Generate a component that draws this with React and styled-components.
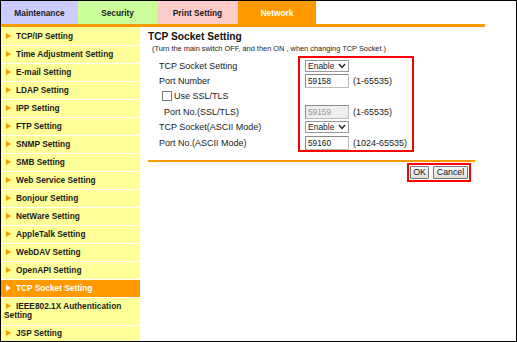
import React from "react";
import styled, { createGlobalStyle } from "styled-components";

const GlobalStyle = createGlobalStyle`
  html, body {
    margin: 0;
    padding: 0;
    background: #fff;
  }
  body {
    font-family: "Liberation Sans", Arial, sans-serif;
  }
`;

// Frame & tabs

const Frame = styled.div`
  width: 517px;
  height: 342px;
  box-sizing: border-box;
  border: 1px solid #000;
  overflow: hidden;
  display: flex;
  flex-direction: column;
  background: #fff;
`;

const TabBar = styled.div`
  display: flex;
  width: 484px;
  height: 23px;
  border-bottom: 3px solid #ff9900;
  flex-shrink: 0;
`;

const Tab = styled.div`
  width: ${p => p.w}px;
  background: ${p => p.bg};
  color: ${p => (p.active ? "#fff" : "#1a1a1a")};
  font-weight: bold;
  font-size: 8.3px;
  display: flex;
  align-items: center;
  justify-content: center;
  padding-top: 1px;
  box-sizing: border-box;
`;

const Body = styled.div`
  display: flex;
  flex: 1;
  min-height: 0;
`;

// Sidebar

const Sidebar = styled.div`
  width: 139px;
  flex-shrink: 0;
  background: #ffff99;
  padding-top: 1px;
`;

const MenuItem = styled.div`
  background: ${p => (p.active ? "#ff9900" : "#ffff99")};
  color: ${p => (p.active ? "#fff" : "#1a1a1a")};
  border-bottom: 1px solid #fff;
  font-size: 8.3px;
  font-weight: bold;
  line-height: 9.5px;
  padding: 3.75px 3px 3.75px 3px;
`;

const Arrow = styled.span`
  display: inline-block;
  width: 0;
  height: 0;
  border-left: 5px solid ${p => (p.active ? "#fff" : "#ff9900")};
  border-top: 3px solid transparent;
  border-bottom: 3px solid transparent;
  margin: 0 5px 0 2px;
`;

// Main area

const Main = styled.div`
  flex: 1;
  padding: 3px 0 0 8px;
`;

const Content = styled.div`
  width: 327px;
`;

const Heading = styled.h1`
  margin: 0;
  font-size: 10.2px;
  font-weight: bold;
  line-height: 13px;
  color: #111;
`;

const Note = styled.div`
  font-size: 7.4px;
  line-height: 10px;
  color: #222;
  padding-left: 4px;
  margin-top: 1px;
`;

const FormArea = styled.div`
  display: flex;
  margin-top: 2px;
`;

const LabelCol = styled.div`
  width: 139px;
  padding: 2px 0 0 11px;
  display: flex;
  flex-direction: column;
`;

const Label = styled.div`
  height: 15.4px;
  display: flex;
  align-items: center;
  font-size: 9px;
  color: #1a1a1a;
  padding-left: ${p => p.indent || 0}px;
`;

const CheckBox = styled.span`
  width: 8px;
  height: 8px;
  border: 1px solid #777;
  background: #fff;
  margin-right: 2px;
`;

const Marked = styled.div`
  width: 116px;
  box-sizing: border-box;
  border: 2px solid #ff0000;
  padding-left: 5px;
  display: flex;
  flex-direction: column;
`;

const Row = styled.div`
  height: 15.4px;
  display: flex;
  align-items: center;
  gap: 4px;
  font-size: 9px;
  color: #1a1a1a;
`;

const SelectWrap = styled.div`
  position: relative;
  width: 44px;
  height: 12px;
`;

const Select = styled.select`
  appearance: none;
  width: 44px;
  height: 12px;
  box-sizing: border-box;
  border: 1px solid #999;
  border-radius: 0;
  background: #fff;
  font-family: "Liberation Sans", Arial, sans-serif;
  font-size: 8.5px;
  padding: 0 0 0 2px;
  color: #222;
  margin: 0;
`;

const Chevron = styled.svg`
  position: absolute;
  right: 3px;
  top: 3px;
  pointer-events: none;
`;

const TextBox = styled.input`
  width: 44px;
  height: 14px;
  box-sizing: border-box;
  border: 1px solid #888;
  border-right-color: #bbb;
  border-bottom-color: #bbb;
  margin: 0;
  padding: 0 2px;
  font-family: "Liberation Sans", Arial, sans-serif;
  font-size: 8.3px;
  color: #111;
  background: #fff;
  &:disabled {
    background: #eeeeee;
    color: #999;
  }
`;

const Divider = styled.div`
  height: 2px;
  background: #ff9900;
  margin-top: 8px;
`;

const ButtonBar = styled.div`
  display: flex;
  justify-content: flex-end;
  padding-right: 4px;
  margin-top: 1px;
`;

const ButtonBox = styled.div`
  display: flex;
  gap: 4px;
  border: 2px solid #ff0000;
  padding: 1px;
`;

const Button = styled.button`
  height: 13px;
  width: ${p => p.w}px;
  padding: 0;
  margin: 0;
  box-sizing: border-box;
  font-family: "Liberation Sans", Arial, sans-serif;
  font-size: 8.8px;
  color: #111;
  background: linear-gradient(#fafafa, #dedede);
  border: 1px solid #777;
  border-radius: 1px;
  line-height: 11px;
`;

const menu = [
  "TCP/IP Setting",
  "Time Adjustment Setting",
  "E-mail Setting",
  "LDAP Setting",
  "IPP Setting",
  "FTP Setting",
  "SNMP Setting",
  "SMB Setting",
  "Web Service Setting",
  "Bonjour Setting",
  "NetWare Setting",
  "AppleTalk Setting",
  "WebDAV Setting",
  "OpenAPI Setting",
  "TCP Socket Setting",
  "IEEE802.1X Authentication Setting",
  "JSP Setting"
];

const tabs = [
  { name: "Maintenance", w: 77, bg: "#ccccff" },
  { name: "Security", w: 79, bg: "#ccff99" },
  { name: "Print Setting", w: 81, bg: "#ffcccc" },
  { name: "Network", w: 78, bg: "#ff9900", active: true }
];

function EnableSelect() {
  return (
    <SelectWrap>
      <Select defaultValue="enable">
        <option value="enable">Enable</option>
        <option value="disable">Disable</option>
      </Select>
      <Chevron width="8" height="6" viewBox="0 0 8 6">
        <path d="M1 1 L4 4.5 L7 1" fill="none" stroke="#222" strokeWidth="1.4" />
      </Chevron>
    </SelectWrap>
  );
}

export default function App() {
  return (
    <>
      <GlobalStyle />
      <Frame>
        <TabBar>
          {tabs.map(t => (
            <Tab key={t.name} w={t.w} bg={t.bg} active={t.active}>
              {t.name}
            </Tab>
          ))}
        </TabBar>
        <Body>
          <Sidebar>
            {menu.map(m => {
              const active = m === "TCP Socket Setting";
              return (
                <MenuItem key={m} active={active}>
                  <Arrow active={active} />
                  {m}
                </MenuItem>
              );
            })}
          </Sidebar>
          <Main>
            <Content>
              <Heading>TCP Socket Setting</Heading>
              <Note>
                (Turn the main switch OFF, and then ON , when changing TCP Socket.)
              </Note>
              <FormArea>
                <LabelCol>
                  <Label>TCP Socket Setting</Label>
                  <Label>Port Number</Label>
                  <Label indent={3}>
                    <CheckBox />
                    Use SSL/TLS
                  </Label>
                  <Label indent={5}>Port No.(SSL/TLS)</Label>
                  <Label>TCP Socket(ASCII Mode)</Label>
                  <Label>Port No.(ASCII Mode)</Label>
                </LabelCol>
                <Marked>
                  <Row>
                    <EnableSelect />
                  </Row>
                  <Row>
                    <TextBox defaultValue="59158" />
                    (1-65535)
                  </Row>
                  <Row />
                  <Row>
                    <TextBox defaultValue="59159" disabled />
                    (1-65535)
                  </Row>
                  <Row>
                    <EnableSelect />
                  </Row>
                  <Row>
                    <TextBox defaultValue="59160" />
                    (1024-65535)
                  </Row>
                </Marked>
              </FormArea>
              <Divider />
              <ButtonBar>
                <ButtonBox>
                  <Button w={19}>OK</Button>
                  <Button w={35}>Cancel</Button>
                </ButtonBox>
              </ButtonBar>
            </Content>
          </Main>
        </Body>
      </Frame>
    </>
  );
}
